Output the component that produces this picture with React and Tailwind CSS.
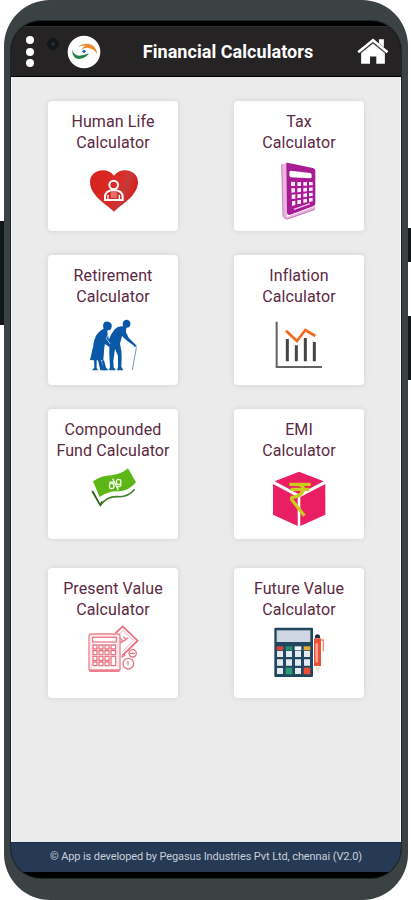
import React from "react";

const HeartIcon = () => (
  <svg viewBox="129 186 180 198" className="w-[60px] h-[66px]">
    <defs>
      <linearGradient id="heart" x1="0" y1="0" x2="1" y2="0.3">
        <stop offset="0" stopColor="#d3221f" />
        <stop offset="0.6" stopColor="#dd2a25" />
        <stop offset="0.8" stopColor="#c43a38" />
        <stop offset="1" stopColor="#d8201d" />
      </linearGradient>
    </defs>
    <path
      d="M222 350C204 330 150 304 150 260C150 226 200 212 222 242C244 212 294 226 294 260C294 304 240 330 222 350Z"
      fill="url(#heart)"
    />
    <g fill="none" stroke="#fff" strokeWidth="6">
      <circle cx="221" cy="270" r="13" />
      <path d="M195 315V306C195 292 206 286 221 286C236 286 248 292 248 306V315Z" />
    </g>
    <path d="M204 314V300M238 314V300" stroke="#fff" strokeWidth="4" />
    <path d="M213 294H230M212 300H231M213 306H230" stroke="#f3b5ae" strokeWidth="3" />
  </svg>
);

const TaxIcon = () => (
  <svg viewBox="132 186 180 198" className="w-[60px] h-[66px]">
    <path d="M170 208L186 204V366L270 334V344L188 373Q178 374 174 364Z" fill="#e9b5df" />
    <path d="M170 208L174 364Q178 371 188 372L270 343" fill="none" stroke="#b352a5" strokeWidth="2" />
    <path d="M184 205Q186 202 191 204L264 219Q271 221 271 228V325Q271 331 266 333L194 360Q187 361 186 353Z" fill="#a81b95" />
    <path d="M196 227L256 234Q260 235 260 240V246Q260 250 256 250L197 247Q192 246 193 237Q193 227 196 227Z" fill="#fff" />
    <g fill="#fbeef9">
      <path d="M198 260L210 261V273L198 273ZM217 261L228 261V273L217 273ZM235 261L246 261V272L235 272ZM252 261L263 261V271L252 271Z" />
      <path d="M199 280L210 280V292L199 293ZM217 280L228 279V291L217 292ZM235 279L246 278V289L235 290ZM252 278L263 277V287L252 288Z" />
      <path d="M200 299L211 298V311L200 312ZM217 298L228 297V308L217 310ZM235 296L246 294V306L235 307ZM252 294L263 293V303L252 304Z" />
      <path d="M201 319L211 317V330L201 333ZM217 316L228 314V326L217 328ZM235 313L246 311V322L235 324ZM252 310L263 308V319L252 321Z" />
    </g>
    <path d="M207 343L255 326" stroke="#f4c9ec" strokeWidth="4" />
  </svg>
);

const RetirementIcon = () => (
  <svg viewBox="129 183 180 198" className="w-[60px] h-[66px]">
    <g fill="#0a59a8">
      <path d="M190 222Q193 213 205 215Q217 218 215 230L213 237Q209 243 203 240Q201 245 203 250L207 270L212 280L207 290L195 282L193 292L190 330H183L191 356L197 361H181L174 331H170V354L174 361H156L163 353L162 331L150 330Q155 308 159 292Q162 262 174 249Q184 238 191 236Q187 229 190 222Z" />
      <path d="M248 220Q251 208 262 209Q273 212 271 224Q269 234 259 233Q258 240 258 247L266 263L290 287L288 292L261 272L246 258L240 281Q246 304 245 323L244 350L250 361H231L234 350V318L225 296L220 333L221 352L228 361H207L210 350L208 315V291L204 276Q211 253 224 238Q235 226 250 229Q247 225 248 220Z" />
      <path d="M185 331H192L198 353L206 361H191Z" />
    </g>
    <path d="M207 247L199 266L211 282" stroke="#fff" strokeWidth="2" fill="none" />
    <path d="M281 290Q288 287 289 293L277 360" fill="none" stroke="#7895bb" strokeWidth="3" />
  </svg>
);

const InflationIcon = () => (
  <svg viewBox="132 183 180 198" className="w-[60px] h-[66px]">
    <path d="M155 215V351H291" fill="none" stroke="#626262" strokeWidth="6" />
    <path d="M187 267V334M214 286V334M241 264V334M268 276V334" stroke="#454545" strokeWidth="9" />
    <path d="M183 242L216 273L241 240L271 258" fill="none" stroke="#f26a1b" strokeWidth="8" />
  </svg>
);

const FundIcon = () => (
  <svg viewBox="129 195 180 198" className="w-[60px] h-[66px]">
    <path d="M159 244Q184 226 215 226Q245 222 264 205L288 247Q267 272 239 274Q207 271 179 291Z" fill="#5cb615" />
    <path d="M156 273L181 316Q201 288 234 290Q264 292 284 268" fill="none" stroke="#46832b" strokeWidth="5" />
    <path d="M158 274L181 315L186 304" fill="none" stroke="#315e27" strokeWidth="4" />
    <g fill="none" stroke="#f4ffe9" strokeWidth="4">
      <ellipse cx="215" cy="258" rx="7" ry="8" />
      <ellipse cx="236" cy="246" rx="7" ry="8" />
      <path d="M218 236L235 270M208 248Q216 243 222 248M229 258Q238 264 244 254" />
    </g>
  </svg>
);

const EmiIcon = () => (
  <svg viewBox="132 195 180 198" className="w-[60px] h-[66px]">
    <path d="M222 215L296 244L222 283L149 244Z" fill="#e91e63" />
    <path d="M144 252L218 291V378L144 344Z" fill="#e91e63" />
    <path d="M301 252L226 291V378L301 344Z" fill="#e91e63" />
    <path
      d="M193 253H257M197 268H253M211 253Q236 253 235 267Q232 287 207 291Q197 291 201 300L238 347"
      fill="none"
      stroke="#c9ce1d"
      strokeWidth="10"
    />
  </svg>
);

const PresentIcon = () => (
  <svg viewBox="129 192 180 198" className="w-[60px] h-[66px]">
    <g fill="none" stroke="#eb7f8c" strokeWidth="4">
      <path d="M226 220L248 199L293 242L247 287" stroke="#e8697a" strokeWidth="5" />
      <path d="M238 222L249 211L281 242L247 275" strokeWidth="2" />
      <path d="M237 234L248 241L241 249L257 239L265 233M250 230L258 238" />
      <rect x="147" y="222" width="93" height="112" rx="7" fill="#fff" />
      <rect x="153" y="228" width="81" height="100" rx="4" strokeWidth="2" stroke="#f5b3ba" />
      <rect x="158" y="232" width="71" height="14" />
      <path d="M148 331H239" strokeWidth="6" />
    </g>
    <g fill="#fff" stroke="#e77584" strokeWidth="4">
      <path d="M159 255H171V267H159ZM177 255H189V267H177ZM195 255H207V267H195ZM213 255H227V267H213Z" />
      <path d="M159 272H171V284H159ZM177 272H189V284H177ZM195 272H207V284H195ZM213 272H227V284H213Z" />
      <path d="M159 289H171V301H159ZM177 289H189V301H177ZM195 289H207V301H195Z" />
      <path d="M159 306H171V317H159ZM177 306H189V317H177ZM195 306H207V317H195ZM213 289H227V317H213Z" />
      <circle cx="278" cy="280" r="11" />
      <circle cx="265" cy="311" r="16" />
    </g>
    <path d="M264 303V315M270 280H285M244 292L256 285" stroke="#e77584" strokeWidth="4" />
  </svg>
);

const FutureIcon = () => (
  <svg viewBox="132 192 180 198" className="w-[60px] h-[66px]">
    <rect x="148" y="203" width="116" height="148" rx="3" fill="#20475f" />
    <rect x="155" y="211" width="101" height="35" fill="#ced6e3" />
    <rect x="155" y="259" width="20" height="12" fill="#d9453a" />
    <rect x="182" y="259" width="20" height="12" fill="#23906f" />
    <rect x="209" y="259" width="20" height="12" fill="#f1f4f7" />
    <rect x="236" y="259" width="20" height="12" fill="#e9ad35" />
    <path
      d="M156 273H174V291H156ZM183 273H201V291H183ZM210 273H228V291H210ZM237 273H255V291H237ZM156 298H174V317H156ZM183 298H201V317H183ZM210 298H228V317H210ZM237 298H255V317H237ZM156 324H174V342H156ZM210 324H228V342H210Z"
      fill="#e5eaf1"
    />
    <rect x="182" y="323" width="20" height="20" fill="#2b9b77" />
    <rect x="236" y="323" width="20" height="20" fill="#ea4f36" />
    <path d="M270 235V228Q271 223 277 223Q284 223 285 228V235Z" fill="#1d3144" />
    <path d="M267 235H288V318H267Z" fill="#ee5138" />
    <path d="M271 250H279V307H271Z" fill="#f6a497" />
    <path d="M287 240H295V274" fill="none" stroke="#ef8878" strokeWidth="4" />
    <path d="M270 320H286L279 339Z" fill="#f3e4dc" />
  </svg>
);

const LogoIcon = () => (
  <svg viewBox="201 105 102 102" className="w-[34px] h-[34px]">
    <circle cx="252" cy="156" r="49" fill="#fff" />
    <path d="M234 142Q247 128 268 132Q288 137 292 161Q280 145 262 143Q252 143 243 149Q252 137 258 137Q245 136 234 142Z" fill="#ed8b35" />
    <path d="M216 149Q221 165 239 167Q254 166 266 160Q258 175 238 177Q217 176 216 149Z" fill="#268347" />
    <path d="M228 171Q249 176 265 162" fill="none" stroke="#268347" strokeWidth="3" />
    <circle cx="252" cy="154" r="5" fill="#3568b0" />
  </svg>
);

const HomeIcon = () => (
  <svg viewBox="457 114 96 82" className="w-8 h-[27px]">
    <path d="M469 159L505 130L541 159V192H515V170H496V192H469Z" fill="#fff" />
    <path d="M523 118H538V142L523 130Z" fill="#fff" />
    <path d="M460 157L505 121L549 157" fill="none" stroke="#fff" strokeWidth="8" />
    <path d="M466 161L505 130L543 161" fill="none" stroke="#4a4849" strokeWidth="2" />
  </svg>
);

const calculators = [
  { line1: "Human Life", line2: "Calculator", Icon: HeartIcon },
  { line1: "Tax", line2: "Calculator", Icon: TaxIcon },
  { line1: "Retirement", line2: "Calculator", Icon: RetirementIcon },
  { line1: "Inflation", line2: "Calculator", Icon: InflationIcon },
  { line1: "Compounded", line2: "Fund Calculator", Icon: FundIcon },
  { line1: "EMI", line2: "Calculator", Icon: EmiIcon },
  { line1: "Present Value", line2: "Calculator", Icon: PresentIcon },
  { line1: "Future Value", line2: "Calculator", Icon: FutureIcon },
];

const Card = ({ line1, line2, Icon }) => (
  <button className="w-[130px] h-[130px] rounded bg-white shadow-[0_0_6px_rgba(0,0,0,0.1)] flex flex-col items-center pt-[10px] text-[#5c2942] text-base leading-[21px] tracking-[0.1px]">
    <span className="whitespace-nowrap">{line1}</span>
    <span className="whitespace-nowrap">{line2}</span>
    <span className="mt-1">
      <Icon />
    </span>
  </button>
);

const Header = () => (
  <header className="h-[50px] shrink-0 bg-[#262324] flex items-center pl-[15px] pr-3 border-t border-[#302d2e]">
    <div className="flex flex-col gap-[3.5px] w-[9px]">
      <span className="w-2 h-2 rounded-full bg-white" />
      <span className="w-2 h-2 rounded-full bg-white" />
      <span className="w-2 h-2 rounded-full bg-white" />
    </div>
    {/* Camera hole */}
    <span className="w-3 h-3 rounded-full bg-[#12181a] ml-3 mb-4 flex items-center justify-center">
      <span className="w-1 h-1 rounded-full bg-[#252f33]" />
    </span>
    <span className="ml-2">
      <LogoIcon />
    </span>
    <h1 className="flex-1 pr-0.5 text-center text-white text-[18px] font-bold tracking-[0.05px] whitespace-nowrap">
      Financial Calculators
    </h1>
    <HomeIcon />
  </header>
);

const App = () => {
  return (
    <div className="w-[411px] h-[900px] bg-white overflow-hidden flex items-start font-[Roboto,sans-serif]">
      <div className="w-1 h-[104px] mt-[221px] bg-[#101716]" />

      <div className="w-[404px] h-[900px] shrink-0 rounded-[46px] bg-[#3b4243] px-[7px] pt-[21px] pb-[22px]">
        <div className="w-[390px] h-[857px] rounded-[30px] bg-black overflow-hidden flex flex-col pt-[5px] pb-[6px] shadow-[0_0_0_1px_#202728]">
          <Header />
          <main className="flex-1 mt-px bg-[#ebebeb] pt-6 pl-9 border-x border-[#f8f8f8]">
            <div className="grid grid-cols-[130px_130px] gap-x-14 gap-y-6">
              {calculators.map((item, index) => (
                <div key={index} className={index > 5 ? "mt-[5px]" : ""}>
                  <Card {...item} />
                </div>
              ))}
            </div>
          </main>
          <footer className="h-[30px] shrink-0 bg-[#273a55] border-t border-[#153047] text-[#c9d0da] text-[11px] tracking-[-0.1px] flex items-center justify-center whitespace-nowrap">
            © App is developed by Pegasus Industries Pvt Ltd, chennai (V2.0)
          </footer>
        </div>
      </div>

      <div className="w-[3px] pt-[228px] flex flex-col gap-[54px]">
        <div className="h-[34px] bg-[#101716]" />
        <div className="h-16 bg-[#101716]" />
      </div>
    </div>
  );
};

export default App;
